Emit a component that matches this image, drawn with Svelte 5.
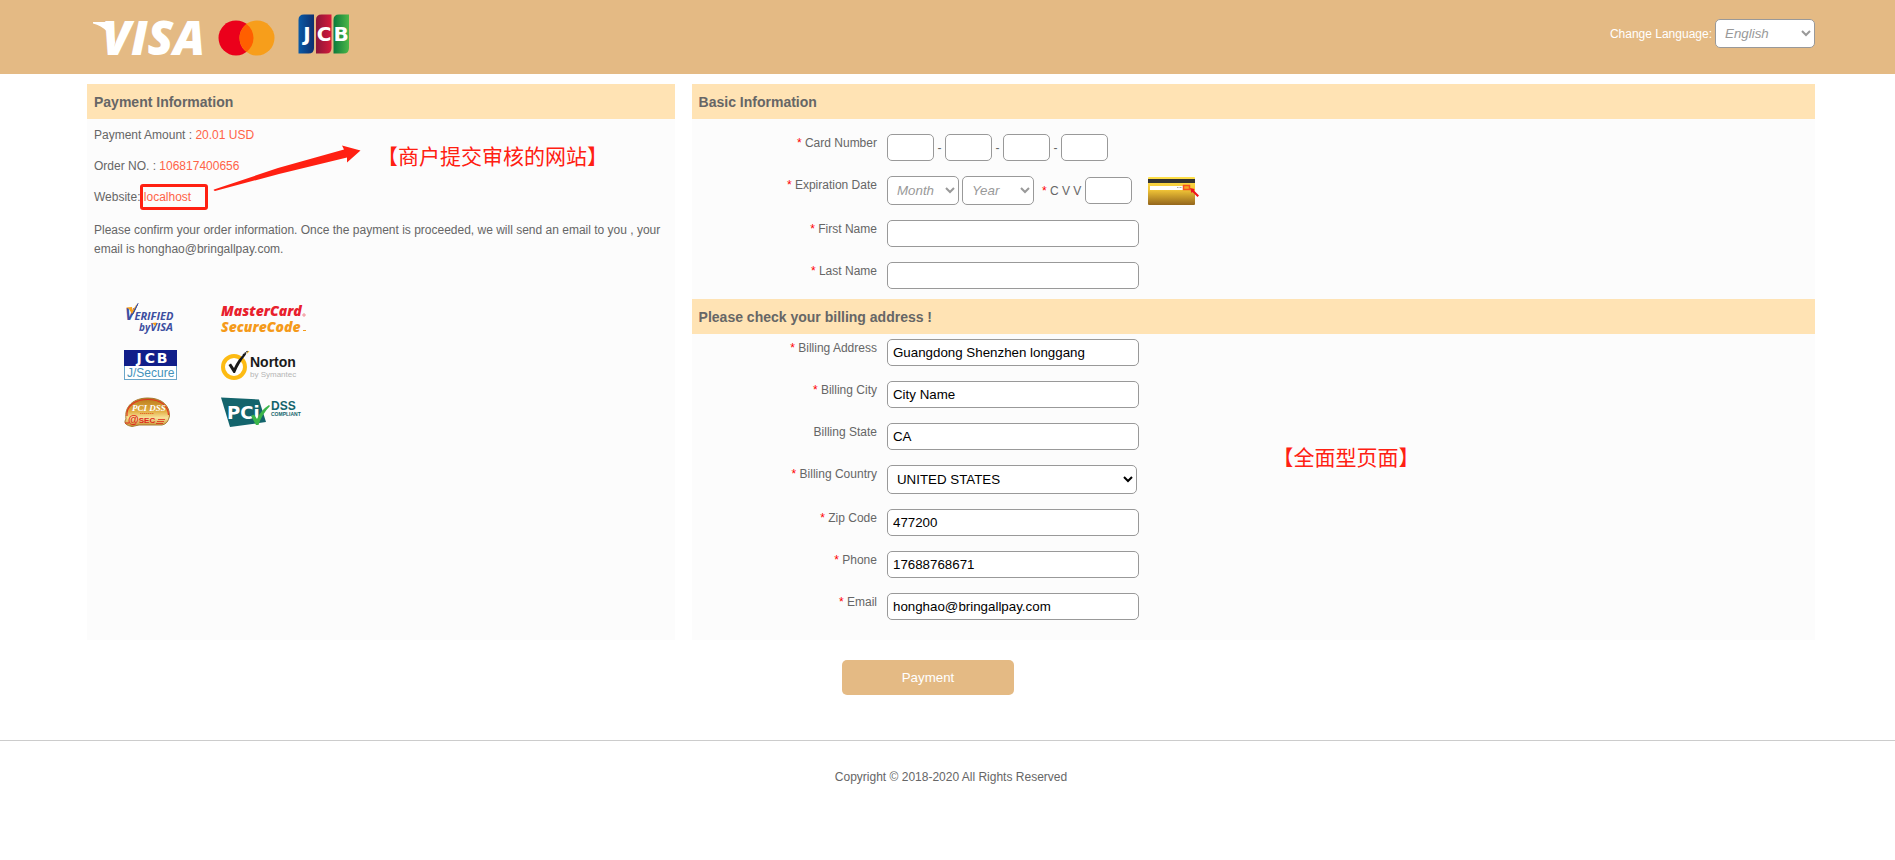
<script>
  const cardParts = ['First', 'Second', 'Third', 'Last'];
  const nameFields = [
    { id: 'first-name', label: 'First Name', value: '' },
    { id: 'last-name', label: 'Last Name', value: '' },
  ];
  const billingFields = [
    { id: 'address', label: 'Billing Address', value: 'Guangdong Shenzhen longgang', required: true },
    { id: 'city', label: 'Billing City', value: 'City Name', required: true },
    { id: 'state', label: 'Billing State', value: 'CA', required: false },
    { id: 'country', label: 'Billing Country', value: 'UNITED STATES', required: true, options: ['UNITED STATES'] },
    { id: 'zip', label: 'Zip Code', value: '477200', required: true },
    { id: 'phone', label: 'Phone', value: '17688768671', required: true },
    { id: 'email', label: 'Email', value: 'honghao@bringallpay.com', required: true },
  ];
</script>

<header class="top">
  <div class="brands">
    <svg width="111" height="36" viewBox="0 0 111 36" role="img" aria-label="Visa">
      <path d="M1 2H14Q19 2 20 7L24 28C20 14 12 6 1 3.500Z" fill="#fff" />
      <text x="10" y="35" class="visa">VISA</text>
    </svg>
    <svg width="58" height="36" viewBox="0 0 58 36" role="img" aria-label="Mastercard">
      <circle cx="18" cy="18" r="17.500" fill="#eb001b" />
      <circle cx="39" cy="18" r="17.500" fill="#f79e1b" />
      <path d="M28.500 4a17.500 17.500 0 0 1 0 28a17.500 17.500 0 0 1 0-28Z" fill="#ff5f00" />
    </svg>
    <svg width="52" height="40" viewBox="0 0 52 40" role="img" aria-label="JCB">
      <defs>
        <linearGradient id="jb"><stop offset="0" stop-color="#0a5aa6" /><stop offset="1" stop-color="#0d2f6e" /></linearGradient>
        <linearGradient id="jr"><stop offset="0" stop-color="#8b1538" /><stop offset="1" stop-color="#d51a3c" /></linearGradient>
        <linearGradient id="jg"><stop offset="0" stop-color="#0b7a3c" /><stop offset="1" stop-color="#4db748" /></linearGradient>
      </defs>
      <path d="M0.500 6Q0.500 0.500 6 0.500H16V34Q16 39.500 10.500 39.500H0.500Z" fill="url(#jb)" />
      <path d="M18 6Q18 0.500 23.500 0.500H33.500V34Q33.500 39.500 28 39.500H18Z" fill="url(#jr)" />
      <path d="M35.500 6Q35.500 0.500 41 0.500H51V34Q51 39.500 45.500 39.500H35.500Z" fill="url(#jg)" />
      <g class="jcb-letters">
        <text x="9" y="27">J</text>
        <text x="26" y="27">C</text>
        <text x="43" y="27">B</text>
      </g>
    </svg>
  </div>
  <div class="language">
    <label for="language">Change Language:</label>
    <select id="language" class="hint lang-select"><option>English</option></select>
  </div>
</header>

<main>
  <div class="columns">
    <section class="panel summary">
      <h2>Payment Information</h2>
      <div class="info">
        <p>Payment Amount : <span class="value">20.01 USD</span></p>
        <p>Order NO. : <span class="value">106817400656</span></p>
        <p>Website: <span class="value site">localhost<i class="frame"></i></span></p>
        <p class="confirm">
          Please confirm your order information. Once the payment is proceeded, we will send an email to you , your
          email is honghao@bringallpay.com.
        </p>
      </div>
      <div class="badges">
        <svg width="54" height="30" viewBox="0 0 54 30" role="img" aria-label="Verified by Visa">
          <g class="verified">
            <text x="1" y="17"><tspan class="v-large">V</tspan>ERIFIED</text>
            <text x="15" y="28"><tspan class="v-by">by </tspan>VISA</text>
          </g>
          <path d="M2 4.500L8 4L8.500 7.500L13 0.500L8.500 12L5 6Z" fill="#f7a11a" />
          <path d="M8 12L14 0.500L9.500 10Z" fill="#3c4fa0" stroke="#3c4fa0" />
          <path d="M28 20L32.500 19.500L31.500 23Z" fill="#f7a11a" />
        </svg>
        <svg width="86" height="30" viewBox="0 0 86 30" role="img" aria-label="MasterCard SecureCode">
          <g class="securecode">
            <text x="0" y="13" fill="#e8202c">MasterCard</text>
            <text x="0" y="29" fill="#f59a1a">SecureCode</text>
          </g>
          <circle cx="83" cy="12" r="1.200" fill="none" stroke="#e8202c" stroke-width="0.500" />
          <path d="M82 27.500H85" stroke="#f59a1a" />
        </svg>
        <svg width="54" height="30" viewBox="0 0 54 30" role="img" aria-label="JCB J/Secure">
          <rect x="0.500" y="0.500" width="52" height="29" fill="#fff" stroke="#6ba6c9" />
          <rect width="53" height="16" fill="#111f8a" />
          <g class="jsecure-top">
            <text x="15" y="13">J</text><text x="26" y="13">C</text><text x="38" y="13">B</text>
          </g>
          <text x="3" y="27" class="jsecure">J/Secure</text>
        </svg>
        <svg width="78" height="30" viewBox="0 0 78 30" role="img" aria-label="Norton by Symantec">
          <circle cx="13" cy="17" r="11" fill="#fff" stroke="#fdbb13" stroke-width="4" />
          <path d="M7.500 15L10 13.500L13 18Q17 9 24 3L25 4.500Q18 13 14 23H12.500Z" fill="#1a1a1a" />
          <path d="M22 5L27 1" stroke="#1a1a1a" stroke-width="1.500" stroke-dasharray="1.500 0.700" />
          <path d="M26 3.500L28 1" stroke="#fdbb13" />
          <text x="29" y="17" class="norton">Norton</text>
          <text x="29" y="27" class="symantec">by Symantec</text>
        </svg>
        <svg width="47" height="30" viewBox="0 0 47 30" role="img" aria-label="PCI DSS @SEC">
          <defs>
            <linearGradient id="gold" x2="0" y2="1">
              <stop offset="0" stop-color="#b87a1c" /><stop offset="0.450" stop-color="#e0ab3e" />
              <stop offset="0.700" stop-color="#f8e29b" /><stop offset="1" stop-color="#c58a27" />
            </linearGradient>
          </defs>
          <path d="M2 22C0 9 10 1 24 1S46 9 45.500 19Q44 27 38 28H15L8 29.500Q0 28 1 24Z" fill="url(#gold)" stroke="#a87a34" />
          <path d="M3 19C2 9 11 2.500 24 2.500S44 9 44.500 18" fill="none" stroke="#e23422" stroke-width="1.200" />
          <text x="8" y="14" class="sec-pci">PCI DSS</text>
          <path d="M16 16.500H30" stroke="#e2702a" stroke-dasharray="1.500 0.500" />
          <text x="4" y="26" class="sec">@<tspan>SEC</tspan></text>
          <path d="M34 22.500H41M33 24.500H40M32 26.500H39" stroke="#df2a1c" stroke-width="0.800" />
          <path d="M1 26H5" stroke="#df2a1c" />
        </svg>
        <svg width="78" height="30" viewBox="0 0 78 30" role="img" aria-label="PCI DSS Compliant">
          <path d="M0 0.500L38 2.500L45 25L9 30Z" fill="#13646c" />
          <text x="6" y="22" class="pci">PCi</text>
          <path d="M30 19L33 17.500L36 22Q40 13 48 8L49 9Q41 17 37.500 28H35Z" fill="#3bb54a" />
          <text x="50" y="13" class="dss">DSS</text>
          <text x="50" y="19" class="compliant">COMPLIANT</text>
        </svg>
      </div>
      <svg class="arrow" width="148" height="48" viewBox="0 0 148 48" aria-hidden="true">
        <path d="M1 44.500L65 23L131 4.500L129 0.500L147.500 5.500L134 17.500V12.500L66 29L2 46Q0 45.500 1 44.500Z" fill="#ff2012" />
      </svg>
      <span class="note note-site">【商户提交审核的网站】</span>
    </section>

    <form class="panel details" id="payment-form">
      <h2>Basic Information</h2>
      <div class="rows basic">
        <div class="row">
          <label for="card-0"><b>*</b> Card Number</label>
          <div class="field">
            {#each cardParts as part, i}
              {#if i > 0}<span class="dash">-</span>{/if}
              <input class="short" id="card-{i}" type="text" aria-label="{part} four digits" />
            {/each}
          </div>
        </div>
        <div class="row">
          <label for="month"><b>*</b> Expiration Date</label>
          <div class="field">
            <select id="month" class="hint date"><option>Month</option></select>
            <select class="hint date year" aria-label="Year"><option>Year</option></select>
            <label class="cvv" for="cvv"><b>*</b> C V V</label>
            <input class="short" id="cvv" type="text" />
            <svg class="cvv-card" width="52" height="28" viewBox="0 0 52 28" aria-hidden="true">
              <defs>
                <linearGradient id="card" x2="0" y2="1">
                  <stop offset="0" stop-color="#ffe14a" /><stop offset="0.450" stop-color="#f2c637" /><stop offset="1" stop-color="#94661c" />
                </linearGradient>
              </defs>
              <rect width="47" height="28" rx="1" fill="url(#card)" />
              <rect y="2" width="47" height="4" fill="#333" />
              <rect x="2" y="9" width="34" height="4" fill="#fff" />
              <path d="M29 10.500H34" stroke="#aaa" stroke-dasharray="1 0.500" />
              <rect x="35.500" y="8.500" width="6" height="4" fill="#f5a623" stroke="#f4511e" stroke-width="1.500" />
              <path d="M42 11L46.500 12L46 13.500L51 18.500L49.500 20L44.500 15L43.500 16Z" fill="#f0141e" />
            </svg>
          </div>
        </div>
        {#each nameFields as f}
          <div class="row">
            <label for={f.id}><b>*</b> {f.label}</label>
            <div class="field"><input id={f.id} type="text" value={f.value} /></div>
          </div>
        {/each}
      </div>
      <h2>Please check your billing address !</h2>
      <div class="rows billing">
        {#each billingFields as f}
          <div class="row">
            <label for={f.id}>{#if f.required}<b>*</b>{/if} {f.label}</label>
            <div class="field">
              {#if f.options}
                <select id={f.id} class="country">
                  {#each f.options as o}<option>{o}</option>{/each}
                </select>
              {:else}
                <input id={f.id} type="text" value={f.value} />
              {/if}
            </div>
          </div>
        {/each}
      </div>
      <span class="note note-page">【全面型页面】</span>
    </form>
  </div>
  <div class="actions"><button type="submit" form="payment-form">Payment</button></div>
</main>

<footer>Copyright © 2018-2020 All Rights Reserved</footer>

<style>
  :global(body) {
    background: #fff;
    color: #666;
    font-family: "Liberation Sans", Arial, sans-serif;
    font-size: 12px;
  }

  .top {
    box-sizing: border-box;
    display: flex;
    justify-content: space-between;
    height: 74px;
    padding: 0 80px 0 92px;
    background: #e4ba84;
  }
  .brands {
    display: flex;
    align-items: flex-start;
    gap: 15px;
    padding-top: 20px;
  }
  .brands svg:last-child {
    margin-top: -6px;
    margin-left: 7px;
  }
  .language {
    display: flex;
    align-items: center;
    gap: 3px;
    height: 67px;
    color: #fff;
  }

  main,
  footer {
    padding: 0 80px 0 87px;
  }
  .columns {
    display: grid;
    grid-template-columns: 34fr 65fr;
    gap: 17px;
    padding-top: 10px;
  }
  .panel {
    position: relative;
    background: #fcfcfc;
  }
  h2 {
    margin: 0;
    padding: 1px 7px 0;
    background: #ffe3b4;
    font-size: 14px;
    line-height: 34px;
  }

  .info {
    padding: 1px 7px 0;
  }
  .info p {
    margin: 0;
    line-height: 31px;
  }
  .info .confirm {
    margin-top: 8px;
    line-height: 19px;
  }
  .value {
    color: #ff6347;
  }
  .site {
    position: relative;
  }
  .frame {
    position: absolute;
    top: -6px;
    left: -4px;
    box-sizing: border-box;
    width: 68px;
    height: 26px;
    border: 3px solid #ff2012;
    border-radius: 3px;
  }
  .arrow {
    position: absolute;
    top: 61px;
    left: 126px;
  }
  .note {
    position: absolute;
    color: #ff2012;
    font-family: "Noto Sans CJK SC", sans-serif;
    font-size: 21px;
    line-height: 30px;
    white-space: nowrap;
  }
  .note-site {
    top: 56px;
    left: 290px;
  }
  .note-page {
    top: 357px;
    left: 581px;
  }

  .badges {
    display: grid;
    grid-template-columns: 97px auto;
    gap: 17px 0;
    margin-top: 44px;
    padding-left: 37px;
  }

  .rows {
    display: flex;
    flex-direction: column;
    gap: 15px;
  }
  .basic {
    padding: 15px 0 10px;
  }
  .billing {
    padding: 5px 0 20px;
  }
  .row {
    display: grid;
    grid-template-columns: 16.5% 1fr;
    gap: 10px;
  }
  .row > label {
    line-height: 18px;
    text-align: right;
  }
  label b {
    color: #f00;
    font-weight: 400;
  }
  .field {
    display: flex;
    align-items: center;
  }
  .dash {
    width: 11px;
    text-align: center;
  }

  input,
  select {
    box-sizing: border-box;
    border: 1px solid #999;
    border-radius: 5px;
    background: #fff;
    color: #000;
    font-family: inherit;
  }
  input {
    width: 252px;
    height: 27px;
    padding: 0 5px;
  }
  select {
    height: 29px;
    padding: 0 5px;
  }
  .short {
    width: 47px;
  }
  .hint {
    color: #999;
    font-style: italic;
  }
  .lang-select {
    width: 100px;
  }
  .date {
    width: 72px;
  }
  .year {
    margin-left: 3px;
  }
  .country {
    width: 250px;
  }
  .cvv {
    margin: 0 4px 0 8px;
  }
  .cvv-card {
    margin-left: 16px;
  }

  .actions {
    display: flex;
    justify-content: center;
    padding: 20px 46px 45px 0;
  }
  button {
    width: 172px;
    height: 35px;
    border: 0;
    border-radius: 5px;
    background: #e4ba84;
    color: #fff;
    font-family: inherit;
  }
  footer {
    border-top: 1px solid #ccc;
    line-height: 72px;
    text-align: center;
  }

  svg {
    overflow: visible;
  }
  .visa {
    fill: #fff;
    font-family: "Open Sans", sans-serif;
    font-size: 47px;
    font-style: italic;
    font-weight: 800;
  }
  .jcb-letters,
  .jsecure-top {
    fill: #fff;
    font-family: "DejaVu Sans", sans-serif;
    font-size: 20px;
    font-weight: 700;
    text-anchor: middle;
  }
  .jsecure-top {
    font-size: 14px;
  }
  .verified {
    fill: #3c4fa0;
    font-family: "Open Sans", sans-serif;
    font-size: 11px;
    font-style: italic;
    font-weight: 700;
  }
  .v-large {
    font-size: 16px;
  }
  .v-by {
    font-size: 10px;
  }
  .securecode {
    font-family: "Open Sans", sans-serif;
    font-size: 14px;
    font-style: italic;
    font-weight: 800;
  }
  .jsecure {
    fill: #4492ba;
    font-size: 12px;
  }
  .norton {
    fill: #1a1a1a;
    font-size: 14px;
    font-weight: 700;
  }
  .symantec {
    fill: #b5b5b5;
    font-size: 8px;
  }
  .sec-pci {
    fill: #fff;
    font-family: "Liberation Serif", serif;
    font-size: 9px;
    font-style: italic;
    font-weight: 700;
  }
  .sec {
    fill: #df2a1c;
    font-size: 11px;
    font-weight: 700;
  }
  .sec tspan {
    font-size: 8px;
  }
  .pci {
    fill: #fff;
    font-family: "DejaVu Sans", sans-serif;
    font-size: 18px;
    font-weight: 700;
  }
  .dss {
    fill: #13646c;
    font-size: 12px;
    font-weight: 700;
  }
  .compliant {
    fill: #13646c;
    font-size: 5px;
    font-weight: 700;
  }
</style>
